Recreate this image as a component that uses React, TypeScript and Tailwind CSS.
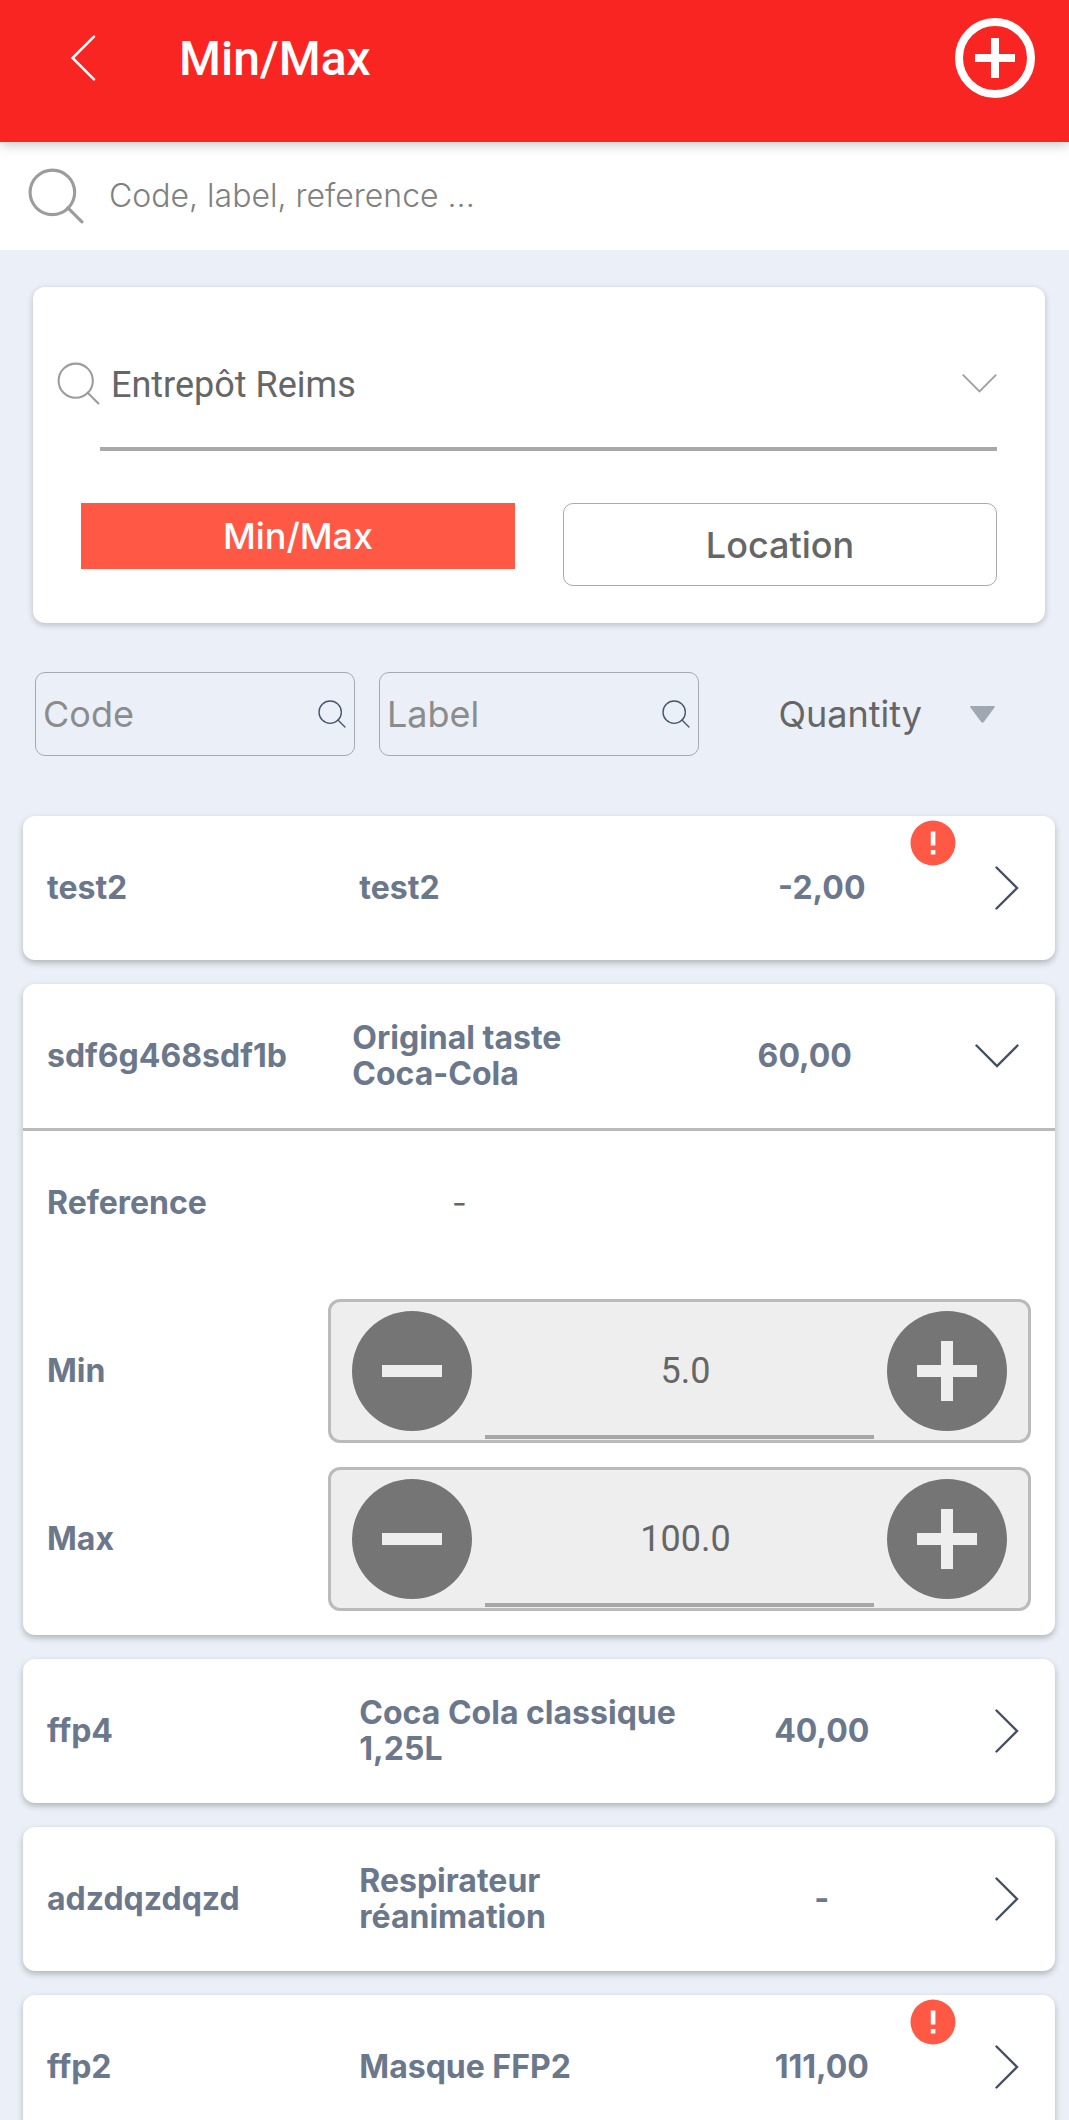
import { useState } from "react";

type Item = { code: string; label: string; quantity: string; alert?: boolean; open?: boolean };

const items: Item[] = [
  { code: "test2", label: "test2", quantity: "-2,00", alert: true },
  { code: "sdf6g468sdf1b", label: "Original taste\nCoca-Cola", quantity: "60,00", open: true },
  { code: "ffp4", label: "Coca Cola classique\n1,25L", quantity: "40,00" },
  { code: "adzdqzdqzd", label: "Respirateur\nréanimation", quantity: "-" },
  { code: "ffp2", label: "Masque FFP2", quantity: "111,00", alert: true },
];

function SearchIcon({ className, stroke }: { className: string; stroke: number }) {
  return (
    <svg viewBox="0 0 54 54" fill="none" stroke="currentColor" strokeWidth={stroke} strokeLinecap="round" className={className} aria-hidden="true">
      <circle cx="23.5" cy="23.5" r="21.5" />
      <path d="M38.5 38.5 52 52" />
    </svg>
  );
}

function ChevronDown({ className }: { className: string }) {
  return (
    <svg viewBox="0 0 44 24" fill="none" stroke="currentColor" strokeWidth="2.4" strokeLinecap="round" className={className} aria-hidden="true">
      <path d="M1.500 1.500 22 22 42.500 1.500" />
    </svg>
  );
}

function ChevronRight({ className }: { className: string }) {
  return (
    <svg viewBox="0 0 24 44" fill="none" stroke="currentColor" strokeWidth="2.4" strokeLinecap="round" className={className} aria-hidden="true">
      <path d="M1.500 1.500 22 22 1.500 42.500" />
    </svg>
  );
}

function AlertBadge() {
  return (
    <svg viewBox="0 0 46 46" className="absolute top-1 right-[99px] size-[46px]" role="img" aria-label="Alert">
      <circle cx="23" cy="23" r="22.5" fill="#ff5845" />
      <path d="M20.8 11.500h4.600v14h-4.600zM20.8 30h4.600v4.600h-4.600z" fill="#fff" />
    </svg>
  );
}

function RoundButton({ label, plus, onClick }: { label: string; plus?: boolean; onClick: () => void }) {
  return (
    <button type="button" aria-label={label} onClick={onClick} className="size-[120px] shrink-0 rounded-full bg-[#757575] text-[#eeeeee]">
      <svg viewBox="0 0 120 120" fill="currentColor" aria-hidden="true">
        <path d="M30 54h60v12H30z" />
        {plus && <path d="M54 30h12v60H54z" />}
      </svg>
    </button>
  );
}

function Stepper({ id, label, initial }: { id: string; label: string; initial: number }) {
  const [value, setValue] = useState(initial.toFixed(1));
  const step = (d: number) => setValue((v) => ((parseFloat(v) || 0) + d).toFixed(1));
  return (
    <div className="flex items-center pr-6 pl-6">
      <label htmlFor={id} className="w-[281px] shrink-0 text-[32px] leading-9 font-bold text-[#6b778b]">
        {label}
      </label>
      <div className="flex h-36 min-w-0 flex-1 items-center justify-between rounded-xl border-3 border-[#bbbbbb] bg-[#eeeeee] px-[21px]">
        <RoundButton label={"Decrease " + label} onClick={() => step(-1)} />
        <input
          id={id}
          value={value}
          onChange={(e) => setValue(e.target.value)}
          className="mx-[13px] mb-px h-32 min-w-0 flex-1 self-end border-b-4 border-[#a6a6a6] bg-transparent pb-1 pl-3 text-center font-['Roboto',sans-serif] text-4xl text-[#666666] outline-none"
        />
        <RoundButton label={"Increase " + label} plus onClick={() => step(1)} />
      </div>
    </div>
  );
}

function ItemCard({ item }: { item: Item }) {
  const [open, setOpen] = useState(!!item.open);
  return (
    <li className="relative shrink-0 rounded-xl bg-white shadow-[0_3px_6px_rgba(0,0,0,0.25)]">
      <button
        type="button"
        aria-expanded={open}
        onClick={() => setOpen(!open)}
        className={
          "grid h-36 w-full items-center pr-9 pl-6 text-left text-[32px] leading-9 font-bold text-[#6b778b] " +
          (open ? "grid-cols-[305fr_340fr_224fr_102fr]" : "grid-cols-[312fr_340fr_244fr_75fr]")
        }
      >
        <span>{item.code}</span>
        <span className="whitespace-pre-line">{item.label}</span>
        <span className="text-center">{item.quantity}</span>
        <span className="flex justify-end text-[#454f63]">
          {open ? <ChevronDown className="h-6 w-11" /> : <ChevronRight className="h-11 w-6" />}
        </span>
      </button>
      {item.alert && <AlertBadge />}
      {open && (
        <div className="flex flex-col gap-6 border-t-3 border-[#bbbbbb] pb-6">
          <dl className="flex h-36 items-center pl-6 text-[32px] leading-9">
            <dt className="w-[405px] font-bold text-[#6b778b]">Reference</dt>
            <dd className="text-[#666666]">-</dd>
          </dl>
          <Stepper id="min" label="Min" initial={5} />
          <Stepper id="max" label="Max" initial={100} />
        </div>
      )}
    </li>
  );
}

function FilterBox({ name }: { name: string }) {
  return (
    <label className="flex h-[84px] w-80 min-w-0 items-center rounded-[10px] border border-[#a5a9b1] pr-2 pl-[7px]">
      <input aria-label={name} placeholder={name} className="min-w-0 flex-1 bg-transparent text-4xl text-[#666666] outline-none placeholder:text-[#8c8c8c]" />
      <SearchIcon className="size-7 shrink-0 text-[#4a546a]" stroke={2.6} />
    </label>
  );
}

export default function App() {
  return (
    <div className="flex h-screen flex-col overflow-hidden bg-[#ebf0f8] font-['Inter',sans-serif]">
      <header className="relative z-10 flex h-[142px] shrink-0 items-start bg-[#f92522] pr-[34px] pl-[70px] shadow-[0_2px_12px_rgba(0,0,0,0.25)]">
        <button type="button" aria-label="Back" className="flex h-[116px] w-[109px] items-center text-white">
          <ChevronRight className="h-[46px] w-[26px] rotate-180" />
        </button>
        <h1 className="flex h-[118px] flex-1 items-center font-['Roboto',sans-serif] text-[48px] font-medium text-white">Min/Max</h1>
        <button type="button" aria-label="Add" className="mt-[18px] size-20 text-white">
          <svg viewBox="0 0 80 80" fill="none" stroke="currentColor" strokeWidth="8" aria-hidden="true">
            <circle cx="40" cy="40" r="36" />
            <path d="M20 40h40M40 20v40" />
          </svg>
        </button>
      </header>

      <label className="flex h-[108px] shrink-0 items-center bg-white pr-7 pl-7">
        <SearchIcon className="size-14 shrink-0 text-[#9c9c9c]" stroke={3} />
        <input aria-label="Search" placeholder="Code, label, reference ..." className="ml-[25px] min-w-0 flex-1 bg-transparent text-[32px] font-light text-[#666666] outline-none placeholder:text-[#808080]" />
      </label>

      <main className="flex min-h-0 flex-1 flex-col overflow-y-auto [scrollbar-width:none]">
        <section className="mt-[37px] mr-6 ml-[33px] shrink-0 rounded-xl bg-white px-12 pt-[52px] pb-[37px] shadow-[0_2px_6px_rgba(0,0,0,0.22)]">
          <div className="-ml-6 flex h-[88px] items-center">
            <SearchIcon className="size-[43px] shrink-0 text-[#9c9c9c]" stroke={2.6} />
            <select aria-label="Warehouse" className="ml-[11px] min-w-0 flex-1 appearance-none bg-transparent pt-1 font-['Roboto',sans-serif] text-4xl text-[#666666] outline-none">
              <option>Entrepôt Reims</option>
            </select>
            <ChevronDown className="h-[19px] w-[35px] shrink-0 text-[#a0a0a0]" />
          </div>
          <hr className="mt-5 ml-[19px] border-t-4 border-[#a9a9a9]" />
          <div className="mt-[52px] grid grid-cols-2 items-start gap-12 text-4xl font-medium">
            <button type="button" className="h-[66px] bg-[#ff5845] text-white">Min/Max</button>
            <button type="button" className="h-[83px] rounded-[10px] border border-[#aaaaaa] text-[#666666]">Location</button>
          </div>
        </section>

        <div className="mt-[49px] mr-[74px] ml-[35px] flex shrink-0 items-center gap-6">
          <FilterBox name="Code" />
          <FilterBox name="Label" />
          <button type="button" className="ml-auto flex items-center gap-12 text-4xl text-[#666666]">
            Quantity
            <svg viewBox="0 0 25 17" className="h-[17px] w-[25px]" fill="#a0a7b3" aria-hidden="true">
              <path d="M1 0h23q1.500 0 .7 1.300L14 15.800q-1.500 1.800-3 0L.3 1.300Q-.500 0 1 0z" />
            </svg>
          </button>
        </div>

        <ul className="mt-[60px] mr-[14px] ml-[23px] flex flex-col gap-6 pb-6">
          {items.map((item) => (
            <ItemCard key={item.code} item={item} />
          ))}
        </ul>
      </main>
    </div>
  );
}
